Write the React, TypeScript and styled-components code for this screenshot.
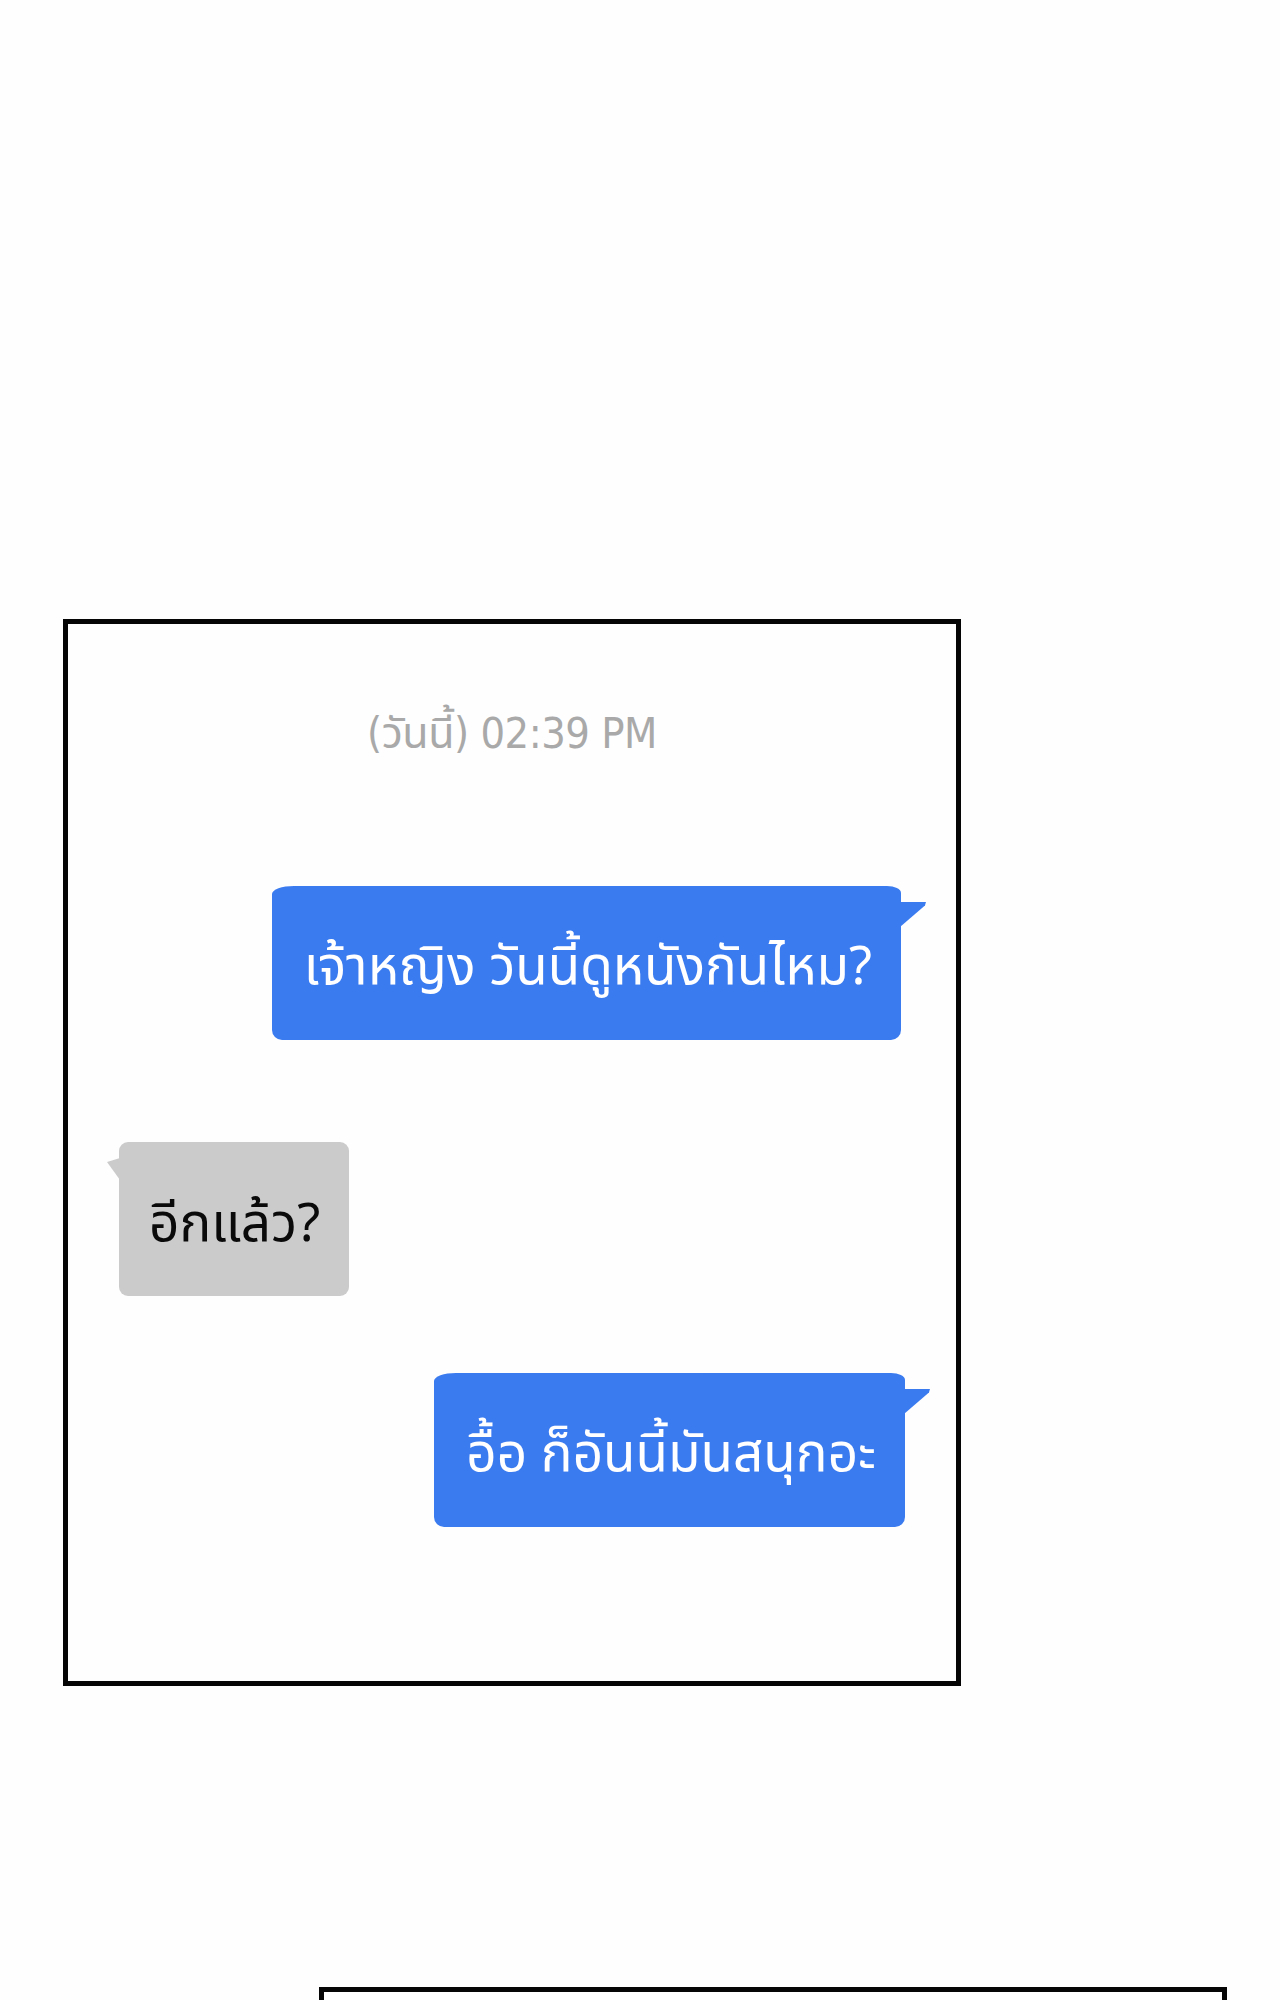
import styled, { createGlobalStyle } from 'styled-components';

const GlobalStyle = createGlobalStyle`
  html, body {
    margin: 0;
    padding: 0;
    background: #fefefe;
  }
`;

const thai = `"Noto Sans Thai", "Noto Sans Thai UI", Thonburi, Loma, Garuda, "Tlwg Typo", "Noto Sans", sans-serif`;

const Page = styled.div`
  width: 1280px;
  height: 2000px;
  overflow: hidden;
  padding-top: 619px;
  box-sizing: border-box;
  display: flex;
  flex-direction: column;
`;

const Panel = styled.section<{ $left: number; $width: number; $height: number; $top?: number }>`
  margin-left: ${(p) => p.$left}px;
  margin-top: ${(p) => p.$top ?? 0}px;
  width: ${(p) => p.$width}px;
  height: ${(p) => p.$height}px;
  flex-shrink: 0;
  box-sizing: border-box;
  border: 5px solid #050505;
  background: #fefefe;
  display: flex;
  flex-direction: column;
`;

const Stamp = styled.div`
  margin-top: 85px;
  align-self: center;
  font-family: "DejaVu Sans Condensed", ${thai};
  font-size: 43px;
  line-height: 48px;
  color: #a9a9a9;
  letter-spacing: -0.5px;
`;

const Bubble = styled.div<{ $mine?: boolean; $top: number; $side: number }>`
  position: relative;
  align-self: ${(p) => (p.$mine ? 'flex-end' : 'flex-start')};
  margin-top: ${(p) => p.$top}px;
  ${(p) => (p.$mine ? `margin-right: ${p.$side}px;` : `margin-left: ${p.$side}px;`)}
  height: 154px;
  box-sizing: border-box;
  padding: ${(p) => (p.$mine ? '10px 29px 0 32px' : '12px 29px 0 30px')};
  display: flex;
  align-items: center;
  border-radius: ${(p) => (p.$mine ? '22px 14px 10px 10px / 8px 7px 10px 10px' : '9px')};
  background: ${(p) => (p.$mine ? '#3b7bf0' : '#cbcbcb')};
  color: ${(p) => (p.$mine ? '#ffffff' : '#0a0a0a')};
  font-family: ${thai};
  font-size: 53px;
  white-space: nowrap;

  &::after {
    content: '';
    position: absolute;
    top: 16px;
    ${(p) => (p.$mine ? 'right: -25px;' : 'left: -12px;')}
    width: ${(p) => (p.$mine ? 26 : 13)}px;
    height: ${(p) => (p.$mine ? 25 : 22)}px;
    background: inherit;
    clip-path: ${(p) =>
      p.$mine
        ? 'polygon(0 0, 100% 0, 96% 14%, 0 100%)'
        : 'polygon(0 18%, 100% 0, 100% 100%)'};
  }
`;

export default function App() {
  return (
    <>
      <GlobalStyle />
      <Page>
        <Panel $left={63} $width={898} $height={1067}>
          <Stamp>(วันนี้) 02:39 PM</Stamp>
          <Bubble $mine $top={129} $side={55}>
            เจ้าหญิง วันนี้ดูหนังกันไหม?
          </Bubble>
          <Bubble $top={102} $side={51}>
            อีกแล้ว?
          </Bubble>
          <Bubble $mine $top={77} $side={51}>
            อื้อ ก็อันนี้มันสนุกอะ
          </Bubble>
        </Panel>
        <Panel $left={319} $width={908} $height={600} $top={301} />
      </Page>
    </>
  );
}
